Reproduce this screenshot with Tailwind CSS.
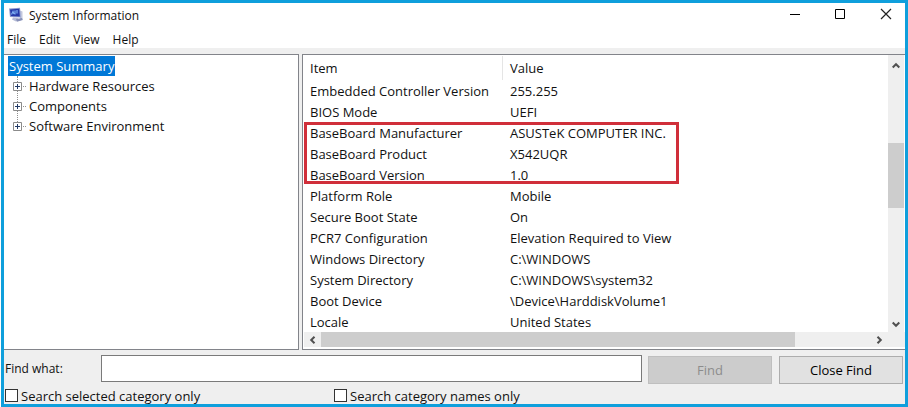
<!DOCTYPE html>
<html lang="en">
<head>
<meta charset="utf-8">
<meta name="viewport" content="width=device-width, initial-scale=1">
<title>System Information</title>
<script src="https://cdn.jsdelivr.net/npm/@tailwindcss/browser@4"></script>
</head>
<body class="h-screen overflow-hidden bg-white pl-px font-['Open_Sans','Noto_Sans',sans-serif] text-[13px] leading-5 text-[#111]">
<div class="flex h-full flex-col border-3 border-[#0f9fdc] bg-[#efefef]">
  <header class="flex h-7 shrink-0 items-center bg-white pl-1">
    <svg class="mt-[-4px] h-4 w-4 shrink-0" viewBox="0 0 16 16" aria-hidden="true">
      <path d="M12 3.500l2.500 1v8l-2.500 1z" fill="#c3c8de"/>
      <path d="M1 1.500l11-.8.8 9.800-10.800-.5z" fill="#8e9bd0"/>
      <path d="M2 2.500l9.200-.7.6 7.700-9-.4z" fill="#2438a8"/>
      <path d="M3.500 7.500l1.500-3 1 2.500M7 3.500v4M9 3v3.500" stroke="#7fb0f4" stroke-width="1.200" fill="none"/>
      <path d="M5 10.500l4 .2 3 2.300-4 1.500-4-2z" fill="#b5bbd6"/>
      <path d="M8 12l6-1 .8 2-5.800 1.800z" fill="#8790b8"/>
    </svg>
    <h1 class="mt-[-2px] ml-[5px] text-xs">System Information</h1>
    <div class="-mr-1 ml-auto flex h-full items-center">
      <button class="flex h-full w-[46px] items-center justify-center" aria-label="Minimize"><svg class="mt-[-6px] h-3 w-3" viewBox="0 0 12 12"><path d="M2 6.500h10" stroke="#000"/></svg></button>
      <button class="flex h-full w-[46px] items-center justify-center" aria-label="Maximize"><svg class="mt-[-6px] h-3 w-3" viewBox="0 0 12 12"><path d="M1.500 1.500h9v9h-9z" stroke="#000" fill="none"/></svg></button>
      <button class="flex h-full w-[46px] items-center justify-center" aria-label="Close"><svg class="mt-[-6px] h-3 w-3" viewBox="0 0 12 12"><path d="M1 1l10 10M11 1L1 11" stroke="#222" stroke-width="1.200"/></svg></button>
    </div>
  </header>
  <nav class="flex h-[17px] shrink-0 items-center gap-[13px] bg-white pl-[3px] text-xs">
    <button>File</button><button>Edit</button><button>View</button><button>Help</button>
  </nav>
  <main class="mt-[6px] flex min-h-0 flex-1 gap-[3px]">
    <section class="w-[295px] shrink-0 border-y border-r border-[#82848a] bg-white pt-px pl-1" aria-label="Categories">
      <button class="block h-5 bg-[#0078d7] px-px text-white">System Summary</button>
      <ul class="relative">
        <li class="absolute top-0 left-[9px] h-[50px] border-l border-dotted border-[#909090]" aria-hidden="true"></li>
        <li class="relative flex h-5 items-center">
          <svg class="ml-[5px] h-[9px] w-[13px]" viewBox="0 0 13 9"><path d="M.5.500h8v8h-8z" fill="#fff" stroke="#8b8b8b"/><path d="M2 4.500h5M4.500 2v5" stroke="#223a66"/><path d="M10 4.500h1M12 4.500h1" stroke="#909090"/></svg>
          <button class="ml-[3px]">Hardware Resources</button>
        </li>
        <li class="relative flex h-5 items-center">
          <svg class="ml-[5px] h-[9px] w-[13px]" viewBox="0 0 13 9"><path d="M.5.500h8v8h-8z" fill="#fff" stroke="#8b8b8b"/><path d="M2 4.500h5M4.500 2v5" stroke="#223a66"/><path d="M10 4.500h1M12 4.500h1" stroke="#909090"/></svg>
          <button class="ml-[3px]">Components</button>
        </li>
        <li class="relative flex h-5 items-center">
          <svg class="ml-[5px] h-[9px] w-[13px]" viewBox="0 0 13 9"><path d="M.5.500h8v8h-8z" fill="#fff" stroke="#8b8b8b"/><path d="M2 4.500h5M4.500 2v5" stroke="#223a66"/><path d="M10 4.500h1M12 4.500h1" stroke="#909090"/></svg>
          <button class="ml-[3px]">Software Environment</button>
        </li>
      </ul>
    </section>
    <section class="relative flex min-w-0 flex-1 flex-col border-y border-l border-[#82848a] bg-white pb-[2px]" aria-label="Details">
      <div class="flex min-h-0 flex-1">
        <div class="min-w-0 flex-1 overflow-hidden">
          <table class="w-full table-fixed border-collapse text-left">
            <thead>
              <tr class="h-[25px]"><th class="w-[200px] bg-[linear-gradient(#e5e5e5,#e5e5e5)] bg-[length:1px_24px] bg-right bg-no-repeat p-0 pt-px pl-[7px] font-normal">Item</th><th class="p-0 pt-px pl-[7px] font-normal">Value</th></tr>
            </thead>
            <tbody class="[&_td]:h-[21px] [&_td]:p-0 [&_td]:pl-[7px] [&_td]:whitespace-nowrap">
              <tr><td>Embedded Controller Version</td><td>255.255</td></tr>
              <tr><td>BIOS Mode</td><td>UEFI</td></tr>
              <tr><td>BaseBoard Manufacturer</td><td>ASUSTeK COMPUTER INC.</td></tr>
              <tr><td>BaseBoard Product</td><td>X542UQR</td></tr>
              <tr><td>BaseBoard Version</td><td>1.0</td></tr>
              <tr><td>Platform Role</td><td>Mobile</td></tr>
              <tr><td>Secure Boot State</td><td>On</td></tr>
              <tr><td>PCR7 Configuration</td><td>Elevation Required to View</td></tr>
              <tr><td>Windows Directory</td><td>C:\WINDOWS</td></tr>
              <tr><td>System Directory</td><td>C:\WINDOWS\system32</td></tr>
              <tr><td>Boot Device</td><td>\Device\HarddiskVolume1</td></tr>
              <tr><td>Locale</td><td>United States</td></tr>
            </tbody>
          </table>
        </div>
        <div class="flex w-[17px] shrink-0 flex-col border-r border-white bg-[#efefef]">
          <button class="flex h-[17px] items-center justify-center" aria-label="Scroll up"><svg class="mt-1 h-2 w-2" viewBox="0 0 8 8"><path d="M.7 5.500L4 2.200l3.300 3.300" fill="none" stroke="#505050" stroke-width="2"/></svg></button>
          <div class="mt-[71px] h-[65px] bg-[#cdcdcd]"></div>
          <button class="mt-auto flex h-[17px] items-center justify-center" aria-label="Scroll down"><svg class="h-2 w-2" viewBox="0 0 8 8"><path d="M.7 2.500L4 5.800l3.300-3.300" fill="none" stroke="#505050" stroke-width="2"/></svg></button>
        </div>
      </div>
      <div class="ml-px flex h-[15px] shrink-0 bg-[#efefef]">
        <button class="flex w-[17px] items-center justify-center" aria-label="Scroll left"><svg class="h-2 w-2" viewBox="0 0 8 8"><path d="M5.500.7L2.200 4l3.300 3.300" fill="none" stroke="#505050" stroke-width="2"/></svg></button>
        <div class="mr-[75px] flex-1 bg-[#cdcdcd]"></div>
        <button class="mr-[18px] flex w-[17px] items-center justify-center" aria-label="Scroll right"><svg class="h-2 w-2" viewBox="0 0 8 8"><path d="M2.500.7L5.800 4 2.500 7.300" fill="none" stroke="#505050" stroke-width="2"/></svg></button>
      </div>
      <div class="pointer-events-none absolute top-[67px] left-px h-[62px] w-[375px] border-3 border-[#d02f3a]"></div>
    </section>
  </main>
  <form class="shrink-0 px-px">
    <div class="flex items-start pt-[5px]">
      <label for="find" class="mt-1 w-24 shrink-0 text-xs leading-5">Find what:</label>
      <input id="find" type="text" class="h-[27px] min-w-0 flex-1 border border-[#7a7a7a] bg-white px-1 outline-none">
      <button type="button" disabled class="mt-px ml-[6px] h-7 w-[124px] shrink-0 border border-[#bfbfbf] bg-[#cccccc] text-[#8c8c8c]">Find</button>
      <button type="button" class="mt-px mr-px ml-[7px] h-7 w-[124px] shrink-0 border border-[#adadad] bg-[#e1e1e1] text-black">Close Find</button>
    </div>
    <div class="flex h-5 items-center pt-[3px]">
      <label class="flex w-[329px] items-center gap-[3px]"><input type="checkbox" class="h-[13px] w-[13px] appearance-none border border-[#333] bg-white">Search selected category only</label>
      <label class="flex items-center gap-[3px]"><input type="checkbox" class="h-[13px] w-[13px] appearance-none border border-[#333] bg-white">Search category names only</label>
    </div>
  </form>
</div>
</body>
</html>
